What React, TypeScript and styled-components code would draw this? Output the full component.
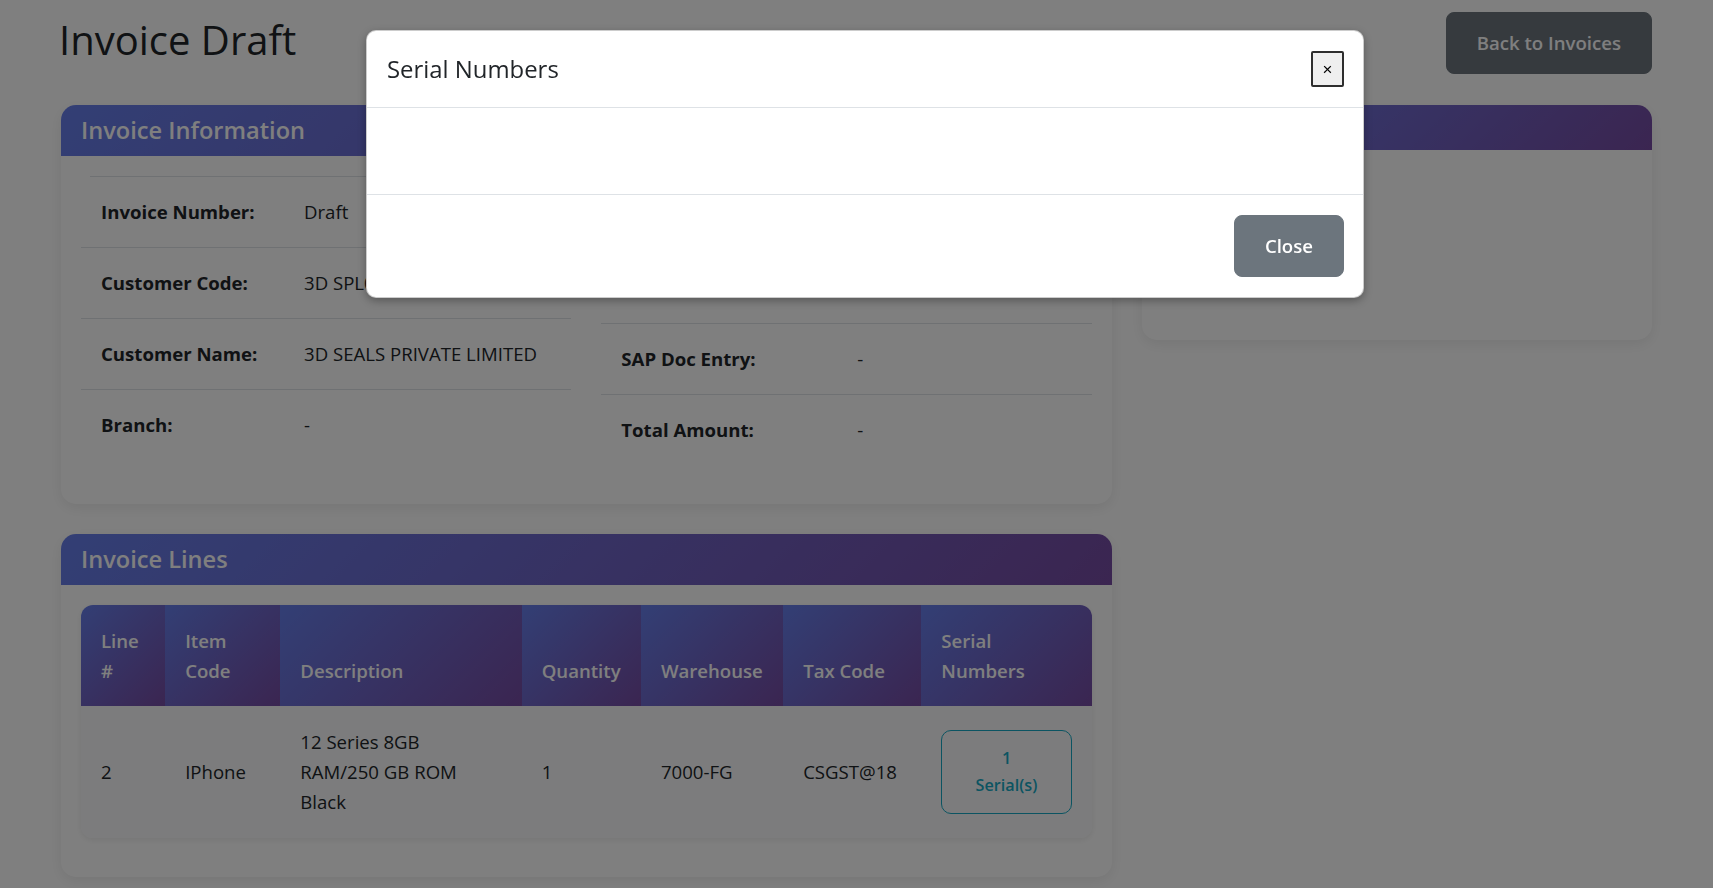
import React from "react";
import styled, { createGlobalStyle } from "styled-components";

const GlobalStyle = createGlobalStyle`
  *, *::before, *::after { box-sizing: border-box; }
  html, body { margin: 0; padding: 0; }
  body {
    font-family: "Open Sans", "Noto Sans", "Liberation Sans", sans-serif;
    font-size: 18.6px;
    line-height: 30px;
    color: #212529;
    background: #ffffff;
    overflow: hidden;
  }
`;

const Page = styled.div`
  padding: 12px 61px 12px;
`;

const TopBar = styled.header`
  display: flex;
  justify-content: space-between;
  align-items: flex-start;
  margin-bottom: 31px;
`;

const PageTitle = styled.h1`
  margin: 4px 0 0 -2px;
  font-size: 40px;
  line-height: 48px;
  font-weight: 500;
  color: #212529;
`;

const ActionButton = styled.button`
  font-family: inherit;
  font-size: 18.6px;
  font-weight: 600;
  line-height: 30px;
  padding: 15px 30px;
  border-radius: 8px;
  border: 1px solid #6c757d;
  background: #6c757d;
  color: #ffffff;
  cursor: pointer;
  white-space: nowrap;
`;

const Layout = styled.div`
  display: grid;
  grid-template-columns: 1050fr 510fr;
  column-gap: 30px;
  align-items: start;
`;

const Column = styled.div`
  display: flex;
  flex-direction: column;
  gap: 30px;
`;

const Card = styled.section`
  background: #ffffff;
  border-radius: 15px;
  box-shadow: 0 4px 14px rgba(0, 0, 0, 0.08);
  overflow: hidden;
`;

const CardHeader = styled.div`
  background: linear-gradient(135deg, #667eea 0%, #764ba2 100%);
  color: #ffffff;
  padding: 10px 20px;
`;

const CardTitle = styled.h2<{ $size: "lg" | "md" }>`
  margin: 0;
  font-weight: 600;
  font-size: ${(p) => (p.$size === "lg" ? "23.6px" : "19.8px")};
  line-height: ${(p) => (p.$size === "lg" ? "31px" : "25px")};
`;

const CardBody = styled.div<{ $minHeight?: number }>`
  padding: 20px;
  min-height: ${(p) => (p.$minHeight ? `${p.$minHeight}px` : "auto")};
`;

const InfoGrid = styled.div`
  display: grid;
  grid-template-columns: 1fr 1fr;
  column-gap: 30px;
  align-items: start;
  margin-bottom: 19px;
`;

const InfoList = styled.div`
  display: flex;
  flex-direction: column;
`;

const TopRule = styled.div`
  height: 1px;
  margin-left: 9px;
  background: #dee2e6;
`;

const InfoRow = styled.div<{ $labelWidth: number }>`
  display: grid;
  grid-template-columns: ${(p) => p.$labelWidth}px 1fr;
  align-items: center;
  min-height: 70px;
  border-bottom: 1px solid #dee2e6;
  &:last-child {
    border-bottom: 0;
  }
`;

const InfoLabel = styled.div`
  padding: 20px 0 20px 20px;
  font-weight: 700;
  white-space: nowrap;
`;

const InfoValue = styled.div`
  padding: 20px 0 20px 20px;
  white-space: nowrap;
`;

const StatusBadge = styled.span`
  display: inline-block;
  padding: 5px 12px;
  font-size: 15px;
  line-height: 25px;
  font-weight: 600;
  border-radius: 6px;
  background: #ffc107;
  color: #212529;
  vertical-align: middle;
`;

const TableWrap = styled.div`
  border-radius: 12px;
  overflow: hidden;
  box-shadow: 0 2px 6px rgba(0, 0, 0, 0.08);
  margin-bottom: 19px;
`;

const LinesTable = styled.table`
  width: 100%;
  border-collapse: collapse;
  table-layout: fixed;
`;

const Col = styled.col<{ $w: number }>`
  width: ${(p) => p.$w}px;
`;

const Th = styled.th`
  background: linear-gradient(135deg, #667eea 0%, #764ba2 100%);
  color: #ffffff;
  font-weight: 600;
  text-align: left;
  vertical-align: bottom;
  padding: 21px 20px 20px;
  line-height: 30px;
  white-space: nowrap;
`;

const Td = styled.td<{ $wrap?: boolean }>`
  background: #f8f9fa;
  padding: ${(p) => (p.$wrap ? "21px 26px 21px 20px" : "21px 20px")};
  vertical-align: middle;
  line-height: 30px;
`;

const SerialButton = styled.button`
  display: block;
  width: 100%;
  font-family: inherit;
  font-size: 16.2px;
  font-weight: 600;
  line-height: 27px;
  padding: 14px 30px;
  border: 1px solid #17a9c4;
  border-radius: 10px;
  background: transparent;
  color: #17a9c4;
  text-align: center;
  cursor: pointer;
`;

const Backdrop = styled.div`
  position: fixed;
  inset: 0;
  background: rgba(0, 0, 0, 0.5);
  z-index: 1040;
`;

const ModalLayer = styled.div`
  position: fixed;
  inset: 0;
  z-index: 1050;
  display: flex;
  justify-content: center;
  align-items: flex-start;
  padding: 30px 0 0 17px;
`;

const ModalDialog = styled.div`
  width: 998px;
  background: #ffffff;
  border: 1px solid rgba(0, 0, 0, 0.2);
  border-radius: 10px;
  box-shadow: 0 3px 8px rgba(0, 0, 0, 0.3);
  overflow: hidden;
`;

const ModalHeader = styled.div`
  display: flex;
  justify-content: space-between;
  align-items: center;
  padding: 20px 19px 20px 20px;
  border-bottom: 1px solid #dee2e6;
`;

const ModalTitle = styled.h3`
  margin: 0;
  font-size: 23.9px;
  line-height: 30px;
  font-weight: 500;
  color: #212529;
`;

const DismissButton = styled.button`
  width: 33px;
  height: 36px;
  padding: 0;
  border: 2px solid #2e2e2e;
  border-radius: 2px;
  background: #efefef;
  color: #000000;
  font-family: "Liberation Sans", Arial, sans-serif;
  font-size: 17px;
  line-height: 1;
  cursor: pointer;
`;

const ModalBody = styled.div`
  min-height: 86px;
  padding: 20px;
`;

const ModalFooter = styled.div`
  display: flex;
  justify-content: flex-end;
  padding: 20px 19px 20px 20px;
  border-top: 1px solid #dee2e6;
`;

type Info = { label: string; value: React.ReactNode };

const leftInfo: Info[] = [
  { label: "Invoice Number:", value: "Draft" },
  { label: "Customer Code:", value: "3D SPL001" },
  { label: "Customer Name:", value: "3D SEALS PRIVATE LIMITED" },
  { label: "Branch:", value: "-" },
];

const rightInfo: Info[] = [
  { label: "Status:", value: <StatusBadge>Draft</StatusBadge> },
  { label: "Invoice Date:", value: "-" },
  { label: "SAP Doc Entry:", value: "-" },
  { label: "Total Amount:", value: "-" },
];

const columns: { w: number; head: React.ReactNode }[] = [
  { w: 84, head: <>Line<br />#</> },
  { w: 115, head: <>Item<br />Code</> },
  { w: 241, head: "Description" },
  { w: 119, head: "Quantity" },
  { w: 142, head: "Warehouse" },
  { w: 138, head: "Tax Code" },
  { w: 170, head: <>Serial<br />Numbers</> },
];

function InfoColumn({ rows, labelWidth }: { rows: Info[]; labelWidth: number }) {
  return (
    <InfoList>
      <TopRule />
      {rows.map((r) => (
        <InfoRow key={r.label} $labelWidth={labelWidth}>
          <InfoLabel>{r.label}</InfoLabel>
          <InfoValue>{r.value}</InfoValue>
        </InfoRow>
      ))}
    </InfoList>
  );
}

export default function App() {
  return (
    <>
      <GlobalStyle />
      <Page>
        <TopBar>
          <PageTitle>Invoice Draft</PageTitle>
          <ActionButton>Back to Invoices</ActionButton>
        </TopBar>
        <Layout>
          <Column>
            <Card>
              <CardHeader>
                <CardTitle $size="lg">Invoice Information</CardTitle>
              </CardHeader>
              <CardBody>
                <InfoGrid>
                  <InfoColumn rows={leftInfo} labelWidth={203} />
                  <InfoColumn rows={rightInfo} labelWidth={236} />
                </InfoGrid>
              </CardBody>
            </Card>
            <Card>
              <CardHeader>
                <CardTitle $size="lg">Invoice Lines</CardTitle>
              </CardHeader>
              <CardBody>
                <TableWrap>
                  <LinesTable>
                    <colgroup>
                      {columns.map((c, i) => (
                        <Col key={i} $w={c.w} />
                      ))}
                    </colgroup>
                    <thead>
                      <tr>
                        {columns.map((c, i) => (
                          <Th key={i}>{c.head}</Th>
                        ))}
                      </tr>
                    </thead>
                    <tbody>
                      <tr>
                        <Td>2</Td>
                        <Td>IPhone</Td>
                        <Td $wrap>12 Series 8GB RAM/250 GB ROM Black</Td>
                        <Td>1</Td>
                        <Td>7000-FG</Td>
                        <Td>CSGST@18</Td>
                        <Td>
                          <SerialButton>1 Serial(s)</SerialButton>
                        </Td>
                      </tr>
                    </tbody>
                  </LinesTable>
                </TableWrap>
              </CardBody>
            </Card>
          </Column>
          <Column>
            <Card>
              <CardHeader>
                <CardTitle $size="md">Invoice Summary</CardTitle>
              </CardHeader>
              <CardBody $minHeight={190} />
            </Card>
          </Column>
        </Layout>
      </Page>
      <Backdrop />
      <ModalLayer>
        <ModalDialog role="dialog" aria-label="Serial Numbers">
          <ModalHeader>
            <ModalTitle>Serial Numbers</ModalTitle>
            <DismissButton aria-label="Close">×</DismissButton>
          </ModalHeader>
          <ModalBody />
          <ModalFooter>
            <ActionButton>Close</ActionButton>
          </ModalFooter>
        </ModalDialog>
      </ModalLayer>
    </>
  );
}
